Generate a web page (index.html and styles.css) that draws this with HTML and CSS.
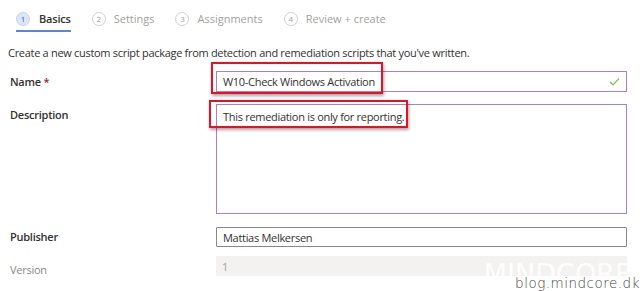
FILE: index.html
```html
<!DOCTYPE html>
<html lang="en">
<head>
    <meta charset="UTF-8">
    <title>Create custom script - Basics</title>
    <link rel="stylesheet" href="styles.css">
</head>
<body>
    <nav class="wizard-tabs">
        <div class="wizard-tab active">
            <span class="step-num">1</span>
            <span class="step-label">Basics</span>
        </div>
        <div class="wizard-tab">
            <span class="step-num">2</span>
            <span class="step-label">Settings</span>
        </div>
        <div class="wizard-tab">
            <span class="step-num">3</span>
            <span class="step-label">Assignments</span>
        </div>
        <div class="wizard-tab">
            <span class="step-num">4</span>
            <span class="step-label">Review + create</span>
        </div>
    </nav>

    <p class="intro">Create a new custom script package from detection and remediation scripts that you've written.</p>

    <form class="script-form">
        <label class="form-label" for="name">Name <span class="required">*</span></label>
        <div class="field field-name">
            <div class="form-input valid">
                <span id="name">W10-Check Windows Activation</span>
                <svg class="check" width="11" height="9" viewBox="0 0 11 9">
                    <path d="M1 5 L4 7.8 L10 1.5" fill="none" stroke="#7fc241" stroke-width="1.2"/>
                </svg>
            </div>
            <div class="highlight highlight-name"></div>
        </div>

        <label class="form-label" for="description">Description</label>
        <div class="field field-desc">
            <div class="form-input textarea" id="description">This remediation is only for reporting.</div>
            <div class="highlight highlight-desc"></div>
        </div>

        <label class="form-label publisher" for="publisher">Publisher</label>
        <div class="field field-publisher">
            <div class="form-input plain" id="publisher">Mattias Melkersen</div>
        </div>

        <label class="form-label disabled" for="version">Version</label>
        <div class="field field-version">
            <div class="form-input readonly" id="version">1</div>
        </div>
    </form>

    <div class="watermark">
        <span class="wm-brand">MINDCORE</span>
        <span class="wm-url">blog.mindcore.dk</span>
    </div>
</body>
</html>
```

FILE: styles.css
```css
:root {
    --text: #323130;
    --text-muted: #8a8886;
    --blue: #5b85d6;
    --purple: #a77fd8;
    --red: #e81123;
}

* {
    box-sizing: border-box;
    margin: 0;
    padding: 0;
}

body {
    font-family: 'Open Sans', 'Noto Sans', sans-serif;
    font-size: 11px;
    color: var(--text);
    background: #ffffff;
    width: 643px;
    height: 291px;
    overflow: hidden;
    position: relative;
}

/* wizard steps */
.wizard-tabs {
    display: flex;
    gap: 21px;
    padding: 9px 0 0 16px;
    height: 33px;
}

.wizard-tab {
    display: flex;
    align-items: center;
    gap: 9px;
    height: 23px;
    padding-bottom: 2px;
    border-bottom: 2px solid transparent;
    color: #a19f9d;
    font-size: 11px;
}

.wizard-tab + .wizard-tab {
    gap: 8px;
}

.wizard-tab.active {
    border-bottom-color: var(--blue);
    color: var(--text);
    font-weight: 600;
    letter-spacing: -0.2px;
}

.step-num {
    width: 14px;
    height: 14px;
    border-radius: 50%;
    border: 1px solid #d2d0ce;
    font-size: 8px;
    font-weight: 400;
    letter-spacing: 0;
    display: flex;
    align-items: center;
    justify-content: center;
    color: #a19f9d;
}

.wizard-tab.active .step-num {
    background: #dce6f7;
    border-color: #c3d3f0;
    color: #3a5fa8;
}

.intro {
    padding: 12px 0 0 8px;
    height: 38px;
    font-size: 11px;
    letter-spacing: -0.3px;
}

/* form grid */
.script-form {
    display: grid;
    grid-template-columns: 206px 411px;
    row-gap: 12px;
    padding-left: 10px;
}

.form-label {
    font-weight: 600;
    font-size: 11px;
    letter-spacing: -0.25px;
    padding-top: 3px;
}

.form-label.publisher {
    padding-top: 3px;
}

.form-label.disabled {
    color: var(--text-muted);
    font-weight: 400;
    padding-top: 3px;
}

.required {
    color: #a4262c;
}

.field {
    position: relative;
}

.form-input {
    display: flex;
    align-items: center;
    justify-content: space-between;
    height: 21px;
    padding: 0 6px;
    border: 1px solid var(--purple);
    font-size: 11px;
    letter-spacing: -0.3px;
    background: #ffffff;
}

.form-input.textarea {
    height: 110px;
    align-items: flex-start;
    padding-top: 4px;
}

.form-input.plain {
    border-color: #8a8886;
    border-radius: 1px;
    height: 20px;
}

.form-input.readonly {
    border: none;
    background: #f3f2f1;
    color: #a19f9d;
    height: 20px;
}

.field-publisher {
    margin-top: 1px;
}

.field-version {
    margin-top: -3px;
}

/* screenshot annotations */
.highlight {
    position: absolute;
    border: 2px solid var(--red);
    box-shadow: 1px 2px 3px rgba(0, 0, 0, 0.35);
    pointer-events: none;
}

.highlight-name {
    left: -5px;
    top: -9px;
    width: 172px;
    height: 32px;
}

.highlight-desc {
    left: -7px;
    top: -4px;
    width: 199px;
    height: 28px;
}

/* watermark */
.watermark {
    position: absolute;
    right: 3px;
    bottom: 1px;
    display: flex;
    flex-direction: column;
    align-items: flex-end;
}

.wm-brand {
    font-family: 'DejaVu Sans', sans-serif;
    font-size: 27px;
    color: rgba(255, 255, 255, 0.9);
    line-height: 24px;
    margin-right: 8px;
}

.wm-url {
    font-family: 'DejaVu Sans', sans-serif;
    font-size: 13.5px;
    font-weight: 200;
    color: #444444;
    letter-spacing: 0.5px;
    line-height: 14px;
    margin-top: -10px;
}
```
